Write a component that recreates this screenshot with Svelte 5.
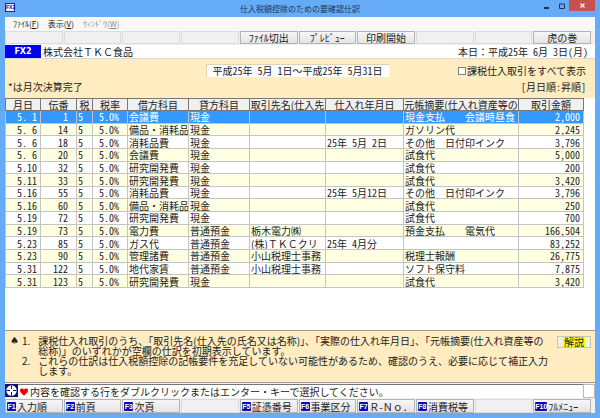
<script>
	const tools = ['', '', '', '', 'ﾌｧｲﾙ切出', 'ﾌﾟﾚﾋﾞｭｰ', '印刷開始', '', '', '虎の巻'];

	const keys = [
		['F1', '入力順'],
		['F2', '前頁'],
		['F3', '次頁'],
		null,
		['F5', '証憑番号'],
		['F6', '事業区分'],
		['F7', 'Ｒ-Ｎｏ．'],
		['F8', '消費税等'],
		null,
		['F10', 'ﾌﾙﾒﾆｭｰ']
	];

	const columns = [
		{ label: '月日', name: 'date' },
		{ label: '伝番', name: 'slip' },
		{ label: '税', name: 'tax' },
		{ label: '税率', name: 'rate' },
		{ label: '借方科目', name: 'debit' },
		{ label: '貸方科目', name: 'credit' },
		{ label: '取引先名(仕入先', name: 'partner' },
		{ label: '仕入れ年月日', name: 'bought' },
		{ label: '元帳摘要(仕入れ資産等の', name: 'memo' },
		{ label: '取引金額', name: 'amount' }
	];

	const rows = [
		['5. 1', '1', '5', '5.0%', '会議費', '現金', '', '', '現金支払　　会議時昼食', '2,000'],
		['5. 6', '14', '5', '5.0%', '備品・消耗品', '現金', '', '', 'ガソリン代', '2,245'],
		['5. 6', '18', '5', '5.0%', '消耗品費', '現金', '', '25年 5月 2日', 'その他　日付印インク', '3,796'],
		['5. 6', '20', '5', '5.0%', '会議費', '現金', '', '', '試食代', '5,000'],
		['5.10', '32', '5', '5.0%', '研究開発費', '現金', '', '', '試食代', '200'],
		['5.11', '33', '5', '5.0%', '研究開発費', '現金', '', '', '試食代', '3,420'],
		['5.16', '55', '5', '5.0%', '消耗品費', '現金', '', '25年 5月12日', 'その他　日付印インク', '3,796'],
		['5.16', '60', '5', '5.0%', '備品・消耗品', '現金', '', '', '試食代', '250'],
		['5.19', '72', '5', '5.0%', '研究開発費', '現金', '', '', '試食代', '700'],
		['5.19', '73', '5', '5.0%', '電力費', '普通預金', '栃木電力㈱', '', '預金支払　　電気代', '166,504'],
		['5.23', '85', '5', '5.0%', 'ガス代', '普通預金', '(株)ＴＫＣクリ', '25年 4月分', '', '83,252'],
		['5.23', '90', '5', '5.0%', '管理諸費', '普通預金', '小山税理士事務', '', '税理士報酬', '26,775'],
		['5.31', '122', '5', '5.0%', '地代家賃', '普通預金', '小山税理士事務', '', 'ソフト保守料', '7,875'],
		['5.31', '123', '5', '5.0%', '研究開発費', '現金', '', '', '試食代', '3,420']
	];

	let selected = $state(0);
	let showAll = $state(false);
</script>

<div class="window">
	<header class="titlebar">
		<span class="app-icon">FX2</span>
		<h1>仕入税額控除のための要確認仕訳</h1>
		<div class="controls">
			<button aria-label="最小化">
				<svg width="6" height="8" viewBox="0 0 6 8"><path d="M0 6h5" stroke="#16345c" stroke-width="2" /></svg>
			</button>
			<button aria-label="最大化">
				<svg width="6" height="6" viewBox="0 0 6 6"><path d="M.5 1h5v4.5h-5z" fill="none" stroke="#16345c" /></svg>
			</button>
			<button class="close" aria-label="閉じる">
				<svg width="5" height="5" viewBox="0 0 5 5"><path d="M.5.5l4 4M4.5.5l-4 4" stroke="#fff" stroke-width="1.2" /></svg>
			</button>
		</div>
	</header>

	<main>
		<nav class="menu">
			<button>ﾌｧｲﾙ(<u>F</u>)</button>
			<button>表示(<u>V</u>)</button>
			<button disabled>ｳｨﾝﾄﾞｳ(<u>W</u>)</button>
		</nav>

		<div class="bar">
			{#each tools as tool}
				{#if tool}
					<button class="tool">{tool}</button>
				{:else}
					<span class="blank"></span>
				{/if}
			{/each}
		</div>

		<div class="company">
			<b>FX2</b>
			<span class="name">株式会社ＴＫＣ食品</span>
			<span class="today">本日：<span class="half"> 平成25年 6月 3日(月)</span></span>
		</div>

		<section class="filter">
			<div class="period"><span class="half">平成25年 5月 1日</span>～<span class="half">平成25年 5月31日</span></div>
			<label class="all"><input type="checkbox" bind:checked={showAll} />課税仕入取引をすべて表示</label>
			<span class="closed">*は月次決算完了</span>
			<span class="order half">[月日順:昇順]</span>
		</section>

		<section class="list">
			<table>
				<colgroup>
					{#each columns as column}
						<col class="col-{column.name}" />
					{/each}
				</colgroup>
				<thead>
					<tr>
						{#each columns as column}
							<th>{column.label}</th>
						{/each}
					</tr>
				</thead>
				<tbody>
					{#each rows as row, i}
						<tr class:selected={i === selected} onclick={() => (selected = i)}>
							{#each row as cell, c}
								<td class={columns[c].name}>{cell}</td>
							{/each}
						</tr>
					{/each}
				</tbody>
			</table>
		</section>

		<section class="notes">
			<span class="spade">♠</span>
			<ol>
				<li><span>1.</span><span>課税仕入れ取引のうち、「取引先名(仕入先の氏名又は名称)」、「実際の仕入れ年月日」、「元帳摘要(仕入れ資産等の<br />総称)」のいずれかが空欄の仕訳を初期表示しています。</span></li>
				<li><span>2.</span><span>これらの仕訳は仕入税額控除の記帳要件を充足していない可能性があるため、確認のうえ、必要に応じて補正入力<br />します。</span></li>
			</ol>
			<button class="help"><span>解説</span></button>
		</section>

		<div class="status">
			<svg class="target" width="13" height="13" viewBox="0 0 13 13">
				<path d="M0 0h13v13H0z" fill="#101078" />
				<circle cx="6.5" cy="6.5" r="5.2" fill="#fff" />
				<path d="M6.5 1.5v10M1.5 6.5h10" stroke="#101060" />
				<path d="M5 6.5h3M6.5 5v3" stroke="#fff" />
			</svg>
			<p>
				<svg width="8" height="8" viewBox="0 0 8 8"><path d="M4 7.8C2.6 6 0 4.6 0 2.4 0 .2 3 0 4 1.9 5 0 8 .2 8 2.4 8 4.6 5.4 6 4 7.8z" fill="#e80000" /></svg>
				<span>内容を確認する行をダブルクリックまたはエンター・キーで選択してください。</span>
			</p>
			<span class="grip"></span>
		</div>

		<footer class="bar keys">
			{#each keys as key}
				{#if key}
					<button class="key"><kbd>{key[0]}</kbd>{key[1]}</button>
				{:else}
					<span class="blank"></span>
				{/if}
			{/each}
		</footer>
	</main>
</div>

<style>
	:global(body) {
		background: #66abf5;
	}

	.window {
		font: 10px/12px 'Noto Sans CJK JP', sans-serif;
		color: #222;
		background: #66abf5;
		padding: 0 5px 5px;
	}

	button {
		font: inherit;
		color: inherit;
		padding: 0;
		border: 0;
		background: none;
		white-space: nowrap;
	}

	/* half-width latin glyphs, so digits keep to the character grid */
	.half,
	.date,
	.slip,
	.tax,
	.rate,
	.bought,
	.amount {
		font-feature-settings: 'hwid';
		white-space: pre;
	}

	.titlebar {
		display: flex;
		position: relative;
		align-items: center;
		justify-content: center;
		height: 17px;
	}

	h1 {
		margin: 0;
		font-size: 8px;
		font-weight: 400;
		color: #16345c;
	}

	.app-icon {
		position: absolute;
		left: 0;
		top: 3px;
		width: 8px;
		border: 1px solid #2222a0;
		background: #eef;
		color: #1010a0;
		font: bold 5px/7px 'Liberation Sans', sans-serif;
		text-align: center;
	}

	.controls {
		position: absolute;
		display: flex;
		right: 0;
		top: 0;
	}

	.controls button {
		display: flex;
		align-items: center;
		justify-content: center;
		width: 15px;
		height: 11px;
	}

	.controls .close {
		width: 26px;
		background: #c8504f;
	}

	main {
		background: #f0f0f0;
	}

	.menu {
		display: flex;
		gap: 9px;
		height: 14px;
		padding-left: 8px;
		background: #f7f7f7;
	}

	.menu button {
		font-size: 8px;
	}

	.menu button:disabled {
		color: #8d8d8d;
	}

	.bar {
		display: grid;
		grid-template-columns: repeat(10, minmax(0, 1fr));
		gap: 1px;
		height: 13px;
		padding-right: 4px;
	}

	.bar button {
		border: 1px solid #b4b4b4;
		background: linear-gradient(#f6f6f6, #e4e4e4);
		line-height: 11px;
	}

	.blank {
		border: 1px solid #dcdcdc;
		background: #f0f0f0;
	}

	.company {
		display: flex;
		align-items: center;
		height: 13px;
		margin-top: 1px;
		padding-right: 7px;
		background: #fff;
		border-bottom: 1px solid #d8d8d8;
	}

	.company b {
		width: 36px;
		background: #0000f0;
		color: #fff;
		font: bold 8px/13px 'DejaVu Sans', sans-serif;
		text-align: center;
	}

	.name {
		margin-left: 2px;
	}

	.today {
		margin-left: auto;
	}

	.filter {
		display: grid;
		grid-template-columns: 1fr 183px 1fr;
		row-gap: 4px;
		padding: 5px 9px 5px 3px;
		background: #ffecc0;
	}

	.period {
		grid-column: 2;
		height: 13px;
		box-sizing: border-box;
		border: 1px solid #ddd3b8;
		border-right: 0;
		border-bottom: 0;
		background: #fff;
		text-align: center;
	}

	.all {
		display: flex;
		align-items: center;
		justify-content: flex-end;
		gap: 1px;
	}

	.all input {
		appearance: none;
		width: 8px;
		height: 8px;
		margin: 0;
		border: 1px solid #808080;
		background: #fff;
	}

	.all input:checked {
		background: #0000f0;
	}

	.order {
		grid-column: 3;
		text-align: right;
	}

	.list {
		height: 232px;
		padding-right: 12px;
		background: #fff;
	}

	table {
		width: 100%;
		height: 190px;
		table-layout: fixed;
		border-collapse: collapse;
	}

	.col-date {
		width: 35px;
	}

	.col-slip {
		width: 36px;
	}

	.col-tax {
		width: 16px;
	}

	.col-rate {
		width: 35px;
	}

	.col-debit,
	.col-credit {
		width: 61px;
	}

	.col-partner {
		width: 76px;
	}

	.col-bought {
		width: 78px;
	}

	.col-memo {
		width: 115px;
	}

	.col-amount {
		width: 65px;
	}

	th,
	td {
		padding: 0;
		line-height: 11px;
		white-space: pre;
		overflow: hidden;
		border: 1px solid #c4c4c4;
	}

	th {
		border-color: #777;
		background: #f0f0f0;
		font-weight: 400;
	}

	td {
		padding-left: 1px;
	}

	tbody tr:nth-child(even) {
		background: #ffffe1;
	}

	tbody tr.selected {
		background: #3399ff;
		color: #fff;
	}

	.date,
	.amount {
		padding-right: 3px;
		text-align: right;
	}

	.slip,
	.rate {
		padding-right: 8px;
		text-align: right;
	}

	.notes {
		display: flex;
		align-items: flex-start;
		gap: 4px;
		padding: 5px 4px 6px 5px;
		border-top: 1px solid #999;
		border-bottom: 1px solid #999;
		background: #ffecc0;
		line-height: 10px;
	}

	.spade {
		width: 8px;
		font-family: 'DejaVu Sans', sans-serif;
	}

	.notes ol {
		flex: 1;
		min-width: 0;
		margin: 0;
		padding: 0;
		list-style: none;
		white-space: nowrap;
	}

	.notes li {
		display: flex;
		gap: 8px;
	}

	.help {
		flex: none;
		width: 34px;
		height: 12px;
		border: 1px solid #c8c8a8;
		background: #f0f0e0;
		line-height: 10px;
	}

	.help span {
		display: block;
		margin: 0 5px;
		background: #ffff00;
	}

	.status {
		display: flex;
		height: 14px;
		margin: 1px 0;
	}

	.status p {
		display: flex;
		flex: 1;
		align-items: center;
		gap: 2px;
		margin: 0;
		padding-left: 2px;
		border-top: 1px solid #777;
		background: #fff;
	}

	.grip {
		width: 10px;
		border: 1px solid #b8b8b8;
		background: #fff;
	}

	.keys {
		height: 14px;
	}

	.key {
		display: flex;
		align-items: center;
		gap: 1px;
		padding-left: 1px;
	}

	kbd {
		min-width: 9px;
		border-radius: 1px;
		background: #0a0ab4;
		color: #fff;
		font: bold 7px/9px 'Liberation Sans Narrow', 'Liberation Sans', sans-serif;
		text-align: center;
	}
</style>
